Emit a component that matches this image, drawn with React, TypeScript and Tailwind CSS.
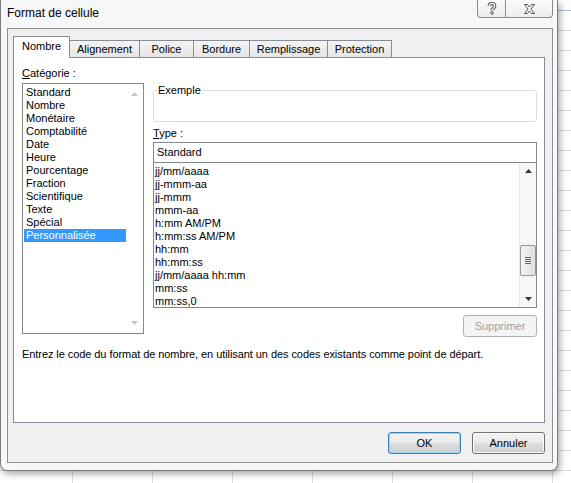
import React from 'react';

const categories = ['Standard', 'Nombre', 'Monétaire', 'Comptabilité', 'Date', 'Heure', 'Pourcentage', 'Fraction', 'Scientifique', 'Texte', 'Spécial', 'Personnalisée'];
const types = ['jj/mm/aaaa', 'jj-mmm-aa', 'jj-mmm', 'mmm-aa', 'h:mm AM/PM', 'h:mm:ss AM/PM', 'hh:mm', 'hh:mm:ss', 'jj/mm/aaaa hh:mm', 'mm:ss', 'mm:ss,0'];
const tabs: [string, number][] = [
  ['Nombre', 57],
  ['Alignement', 71],
  ['Police', 55],
  ['Bordure', 57],
  ['Remplissage', 79],
  ['Protection', 65],
];

const Arrow = ({ up, color }: { up?: boolean; color: string }) => (
  <svg width="7" height="4" viewBox="0 0 7 4">
    <polygon points={up ? '0,4 7,4 3.5,0' : '0,0 7,0 3.5,4'} fill={color} />
  </svg>
);

const Tab = ({ label, width, active }: { label: string; width: number; active: boolean }) => (
  <div
    style={{ width }}
    className={`flex items-center justify-center border-x border-t border-[#898c95] text-[11px] leading-[13px] ${
      active ? 'relative z-10 h-[22px] -mb-px bg-white pb-[2px]' : '-ml-px h-[17px] bg-[linear-gradient(#f3f3f3,#e6e6e6)]'
    }`}
  >
    {label}
  </div>
);

const Button = ({ children, primary, disabled, className = '' }: { children: React.ReactNode; primary?: boolean; disabled?: boolean; className?: string }) => (
  <div
    className={`flex h-[22px] items-center justify-center rounded-[3px] border text-[11px] ${
      disabled
        ? 'border-[#adb2b5] bg-[#f4f4f4] text-[#a0a0a0]'
        : primary
        ? 'border-[#3c7fb1] bg-[linear-gradient(#f2f2f2_0%,#ebebeb_50%,#dddddd_51%,#cfcfcf_100%)] shadow-[inset_0_0_0_1px_#9ad7f5] text-black'
        : 'border-[#707070] bg-[linear-gradient(#f2f2f2_0%,#ebebeb_50%,#dddddd_51%,#cfcfcf_100%)] shadow-[inset_0_0_0_1px_#fcfcfc] text-black'
    } ${className}`}
  >
    {children}
  </div>
);

export default function App() {
  return (
    <div className="h-[483px] w-[571px] overflow-hidden bg-white bg-[linear-gradient(180deg,transparent_10px,#a9bcd3_10px,#a9bcd3_11px,transparent_11px),linear-gradient(180deg,#dadcdd_1px,transparent_1px),linear-gradient(90deg,#dadcdd_1px,transparent_1px)] bg-size-[100%_100%,20px_20px,80px_80px] bg-position-[0_0,0_10px,72px_0] font-['Liberation_Sans',Arial,sans-serif] text-black">
      <div className="flex h-[471px] w-[558px] flex-col rounded-b-[7px] border border-t-0 border-[#7b7b7b] bg-[#f6f7f9] shadow-[2px_3px_7px_rgba(0,0,0,0.35)]">
        {/* title bar */}
        <div className="flex h-[28px] items-start justify-between pl-[6px] pr-[4px]">
          <span className="mt-[6px] text-[12px] leading-[15px]">Format de cellule</span>
          <div className="flex h-[18px]">
            <div className="flex w-[29px] items-center justify-center rounded-bl-[4px] border border-t-0 border-[#8a8a8a] bg-[linear-gradient(#fbfbfb,#eeeeee)]">
              <svg width="10" height="13" viewBox="0 0 10 13">
                <path d="M2.3,4 C2.3,0.6 7.7,0.6 7.7,4 C7.7,6.3 5,6.2 5,8.3" fill="none" stroke="#555" strokeWidth="3.4" strokeLinejoin="round" />
                <circle cx="5" cy="11" r="1.7" fill="#555" />
                <path d="M2.3,4 C2.3,0.6 7.7,0.6 7.7,4 C7.7,6.3 5,6.2 5,8.3" fill="none" stroke="#fafafa" strokeWidth="1.3" strokeLinejoin="round" />
                <circle cx="5" cy="11" r="0.7" fill="#fafafa" />
              </svg>
            </div>
            <div className="-ml-px flex w-[48px] items-center justify-center rounded-br-[4px] border border-t-0 border-[#8a8a8a] bg-[linear-gradient(#fbfbfb,#eeeeee)]">
              <svg width="11" height="10" viewBox="0 0 11 10">
                <polygon
                  points="0.5,0.5 3.5,0.5 5.5,3 7.5,0.5 10.5,0.5 7,5 10.5,9.5 7.5,9.5 5.5,7 3.5,9.5 0.5,9.5 4,5"
                  fill="#fafafa"
                  stroke="#555"
                  strokeWidth="1"
                />
              </svg>
            </div>
          </div>
        </div>

        {/* client area */}
        <div className="mb-[7px] ml-[6px] mr-[4px] flex flex-1 flex-col border border-[#8e8f8f] bg-[#f0f0f0] pl-[5px] pr-[7px] pt-[7px]">
          <div className="flex h-[21px] items-end">
            {tabs.map(([label, width], i) => (
              <Tab key={label} label={label} width={width} active={i === 0} />
            ))}
          </div>

          <div className="flex h-[366px] flex-col border border-[#898c95] bg-white pl-[8px] pr-[7px] pt-[9px]">
            <div className="flex gap-[9px]">
              {/* category */}
              <div className="flex w-[122px] flex-col">
                <span className="text-[11px] leading-[13px]">
                  <span className="underline">C</span>atégorie :
                </span>
                <div className="mt-[3px] flex h-[251px] border border-[#828790]">
                  <div className="flex flex-1 flex-col pl-[1px] pt-[2px]">
                    {categories.map((c) => (
                      <div
                        key={c}
                        className={`h-[13px] pl-[2px] text-[11px] leading-[13px] ${c === 'Personnalisée' ? 'bg-[#3399ff] text-white' : ''}`}
                      >
                        {c}
                      </div>
                    ))}
                  </div>
                  <div className="flex w-[17px] flex-col items-center justify-between py-[8px]">
                    <Arrow up color="#c4c4c4" />
                    <Arrow color="#c4c4c4" />
                  </div>
                </div>
              </div>

              {/* type */}
              <div className="flex w-[384px] flex-col">
                <fieldset className="mt-[17px] h-[38px] rounded-[3px] border border-[#d5dfe5] pl-[3px]">
                  <legend className="px-[1px] text-[11px] leading-[13px]">Exemple</legend>
                </fieldset>
                <span className="mt-[5px] text-[11px] leading-[13px]">
                  <span className="underline">T</span>ype :
                </span>
                <div className="mt-[2px] flex h-[21px] items-center border border-[#828790] pl-[3px] text-[11px]">Standard</div>
                <div className="flex h-[145px] border border-t-0 border-[#828790]">
                  <div className="flex flex-1 flex-col overflow-hidden pl-[1px] pt-[2px]">
                    {types.map((t) => (
                      <div key={t} className="h-[13px] shrink-0 text-[11px] leading-[13px]">
                        {t}
                      </div>
                    ))}
                  </div>
                  <div className="flex w-[17px] flex-col items-center border-l border-[#e8e8e8] bg-[#f7f7f7] pb-[6px] pt-[6px]">
                    <Arrow up color="#333" />
                    <div className="flex-1" />
                    <div className="flex h-[31px] w-[16px] flex-col items-center justify-center gap-[1px] rounded-[2px] border border-[#979797] bg-[linear-gradient(90deg,#f4f4f4,#e0e0e0)]">
                      <div className="h-px w-[6px] bg-[#666]" />
                      <div className="h-px w-[6px] bg-[#666]" />
                      <div className="h-px w-[6px] bg-[#666]" />
                      <div className="h-px w-[6px] bg-[#666]" />
                    </div>
                    <div className="h-[21px]" />
                    <Arrow color="#333" />
                  </div>
                </div>
                <Button disabled className="mt-[7px] w-[74px] self-end">
                  Supprimer
                </Button>
              </div>
            </div>
            <p className="mt-[11px] text-[11px] leading-[13px] tracking-[-0.07px]">
              Entrez le code du format de nombre, en utilisant un des codes existants comme point de départ.
            </p>
          </div>

          <div className="mt-[9px] flex justify-end gap-[11px]">
            <Button primary className="w-[73px]">
              OK
            </Button>
            <Button className="w-[73px]">Annuler</Button>
          </div>
        </div>
      </div>
    </div>
  );
}
